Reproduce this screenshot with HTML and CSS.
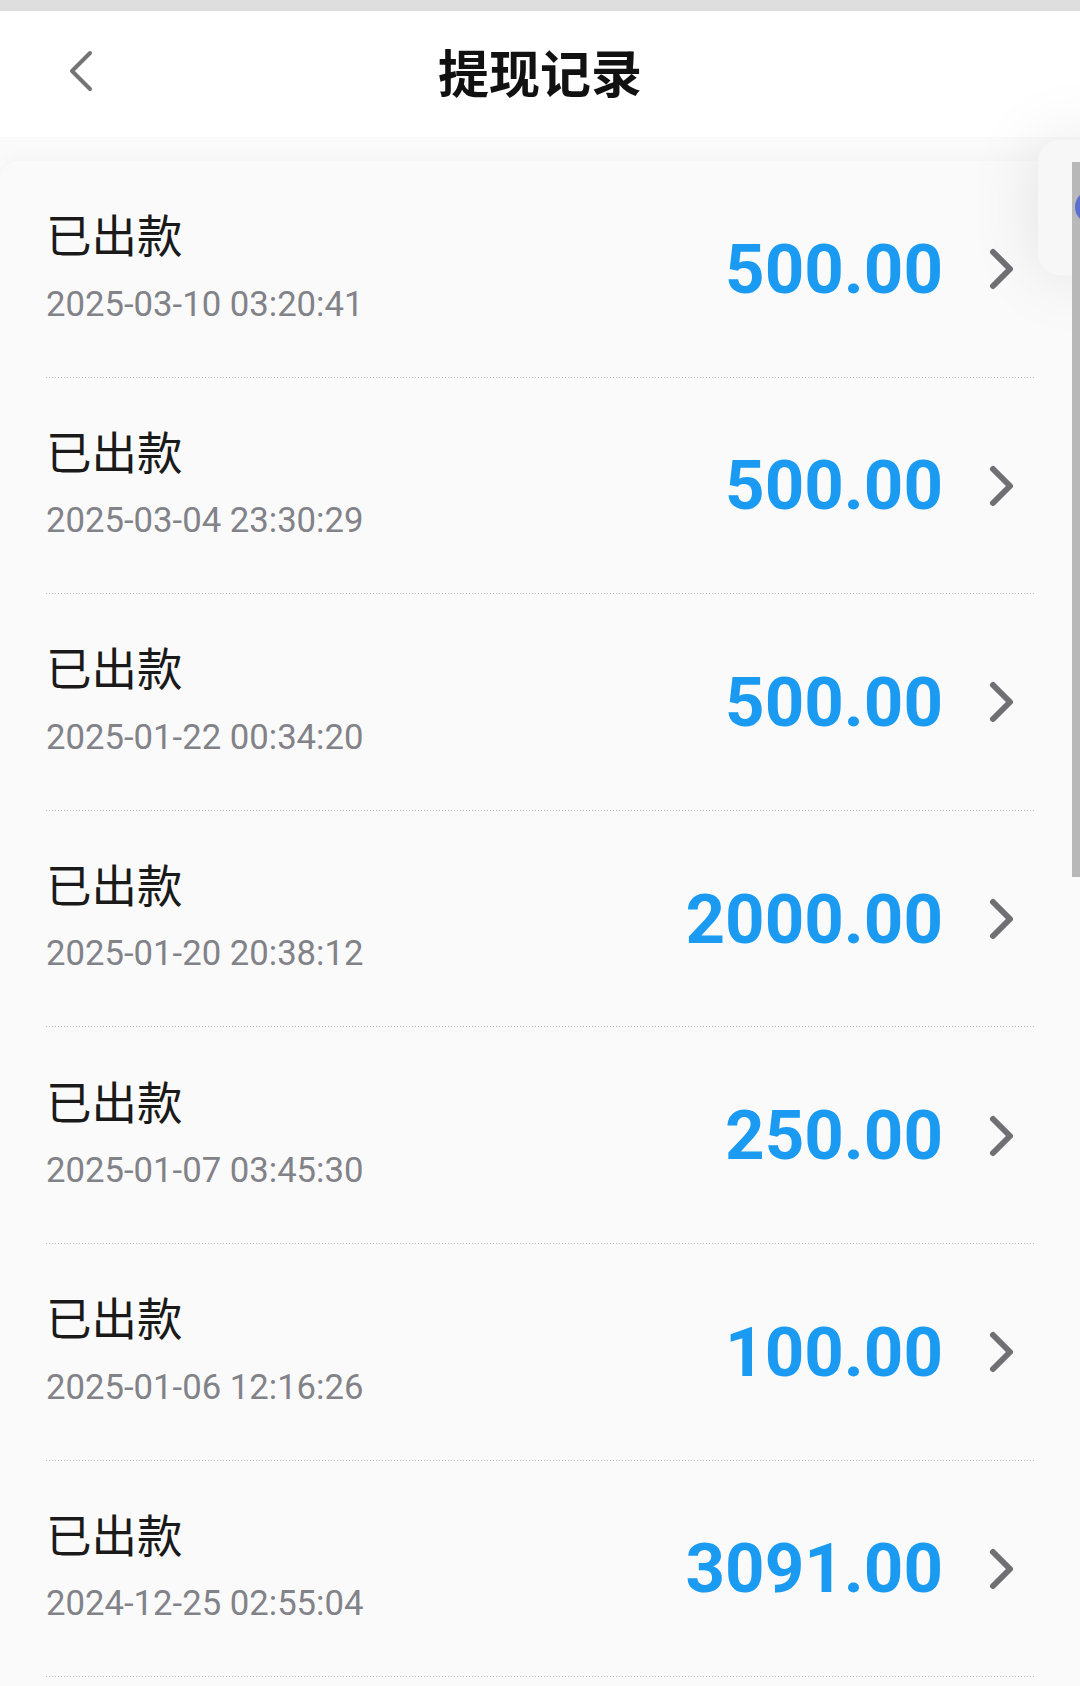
FILE: index.html
```html
<!DOCTYPE html>
<html lang="zh-CN">
	<head>
		<meta charset="utf-8">
		<title>提现记录</title>
		<link rel="stylesheet" href="styles.css">
	</head>
	<body>
		<div class="status-strip"></div>

		<header class="top-bar">
			<div class="back">
				<svg width="28" height="44" viewBox="0 0 28 44"><path d="M23 4 L5 22 L23 40" fill="none" stroke="#747474" stroke-width="4" stroke-linecap="round" stroke-linejoin="round"/></svg>
			</div>
			<h1 class="title">提现记录</h1>
			<div></div>
		</header>

		<!-- withdrawal list -->
		<main class="record-list">
			<div class="record">
				<div class="info">
					<div class="state">已出款</div>
					<div class="time">2025-03-10 03:20:41</div>
				</div>
				<div class="amount">500.00</div>
				<svg class="arrow" width="28" height="44" viewBox="0 0 28 44"><path d="M5 5 L22 22 L5 39"/></svg>
			</div>
			<div class="record">
				<div class="info">
					<div class="state">已出款</div>
					<div class="time">2025-03-04 23:30:29</div>
				</div>
				<div class="amount">500.00</div>
				<svg class="arrow" width="28" height="44" viewBox="0 0 28 44"><path d="M5 5 L22 22 L5 39"/></svg>
			</div>
			<div class="record">
				<div class="info">
					<div class="state">已出款</div>
					<div class="time">2025-01-22 00:34:20</div>
				</div>
				<div class="amount">500.00</div>
				<svg class="arrow" width="28" height="44" viewBox="0 0 28 44"><path d="M5 5 L22 22 L5 39"/></svg>
			</div>
			<div class="record">
				<div class="info">
					<div class="state">已出款</div>
					<div class="time">2025-01-20 20:38:12</div>
				</div>
				<div class="amount">2000.00</div>
				<svg class="arrow" width="28" height="44" viewBox="0 0 28 44"><path d="M5 5 L22 22 L5 39"/></svg>
			</div>
			<div class="record">
				<div class="info">
					<div class="state">已出款</div>
					<div class="time">2025-01-07 03:45:30</div>
				</div>
				<div class="amount">250.00</div>
				<svg class="arrow" width="28" height="44" viewBox="0 0 28 44"><path d="M5 5 L22 22 L5 39"/></svg>
			</div>
			<div class="record">
				<div class="info">
					<div class="state">已出款</div>
					<div class="time">2025-01-06 12:16:26</div>
				</div>
				<div class="amount">100.00</div>
				<svg class="arrow" width="28" height="44" viewBox="0 0 28 44"><path d="M5 5 L22 22 L5 39"/></svg>
			</div>
			<div class="record">
				<div class="info">
					<div class="state">已出款</div>
					<div class="time">2024-12-25 02:55:04</div>
				</div>
				<div class="amount">3091.00</div>
				<svg class="arrow" width="28" height="44" viewBox="0 0 28 44"><path d="M5 5 L22 22 L5 39"/></svg>
			</div>
		</main>

		<!-- floating side widget + scrollbar -->
		<div class="side-widget"></div>
		<div class="scroll-thumb"></div>
		<span class="side-dot"></span>
	</body>
</html>
```

FILE: styles.css
```css
html, body {
	margin: 0;
	background: #fafafa;
}
body {
	font-family: Roboto, "Noto Sans CJK SC", sans-serif;
	color: #1a1a1a;
	height: 1686px;
	overflow: hidden;
	position: relative;
}

.status-strip {
	height: 11px;
	background: #dedede;
}

.top-bar {
	height: 126px;
	background: #ffffff;
	display: grid;
	grid-template-columns: 1fr auto 1fr;
	align-items: center;
}
.top-bar .back {
	padding-left: 67px;
	padding-bottom: 7px;
	display: flex;
}
.top-bar .title {
	margin: 0 0 6px;
	font-family: "Noto Sans CJK SC", sans-serif;
	font-size: 51px;
	font-weight: 700;
	line-height: 1;
	color: #111111;
}

.record-list {
	margin-top: 24px;
	background: #fafafa;
	border-radius: 20px 20px 0 0;
	box-shadow: 0 -6px 14px rgba(0, 0, 0, 0.02);
	padding: 0 45px 0 46px;
}
.record {
	height: 216.6px;
	box-sizing: border-box;
	display: flex;
	align-items: center;
	background: linear-gradient(to right, #b8b8b8 1px, transparent 1px) 0 100% / 3px 1px repeat-x;
	padding-right: 19px;
}
.record .info {
	flex: 1;
	padding-bottom: 6px;
}
.record .state {
	font-family: "Noto Sans CJK SC", sans-serif;
	font-size: 45.5px;
	line-height: 1;
	color: #1a1a1a;
}
.record .time {
	margin-top: 30px;
	font-size: 34.7px;
	line-height: 1;
	color: #828289;
}
.record .amount {
	font-size: 69px;
	font-weight: 700;
	line-height: 1;
	color: #1a9bf1;
	margin-right: 45px;
}
.record .arrow path {
	fill: none;
	stroke: #6f6f74;
	stroke-width: 6;
	stroke-linecap: round;
	stroke-linejoin: round;
}

.side-widget {
	position: absolute;
	left: 1038px;
	top: 140px;
	width: 80px;
	height: 135px;
	border-radius: 22px;
	background: #f7f7f7;
	box-shadow: 0 0 70px rgba(0, 0, 0, 0.10);
}
.scroll-thumb {
	position: absolute;
	right: 0;
	top: 162px;
	width: 8px;
	height: 715px;
	background: #b8b8b8;
}
.side-dot {
	position: absolute;
	left: 1075px;
	top: 190px;
	width: 34px;
	height: 34px;
	border-radius: 50%;
	background: #5a6fd0;
}
```
